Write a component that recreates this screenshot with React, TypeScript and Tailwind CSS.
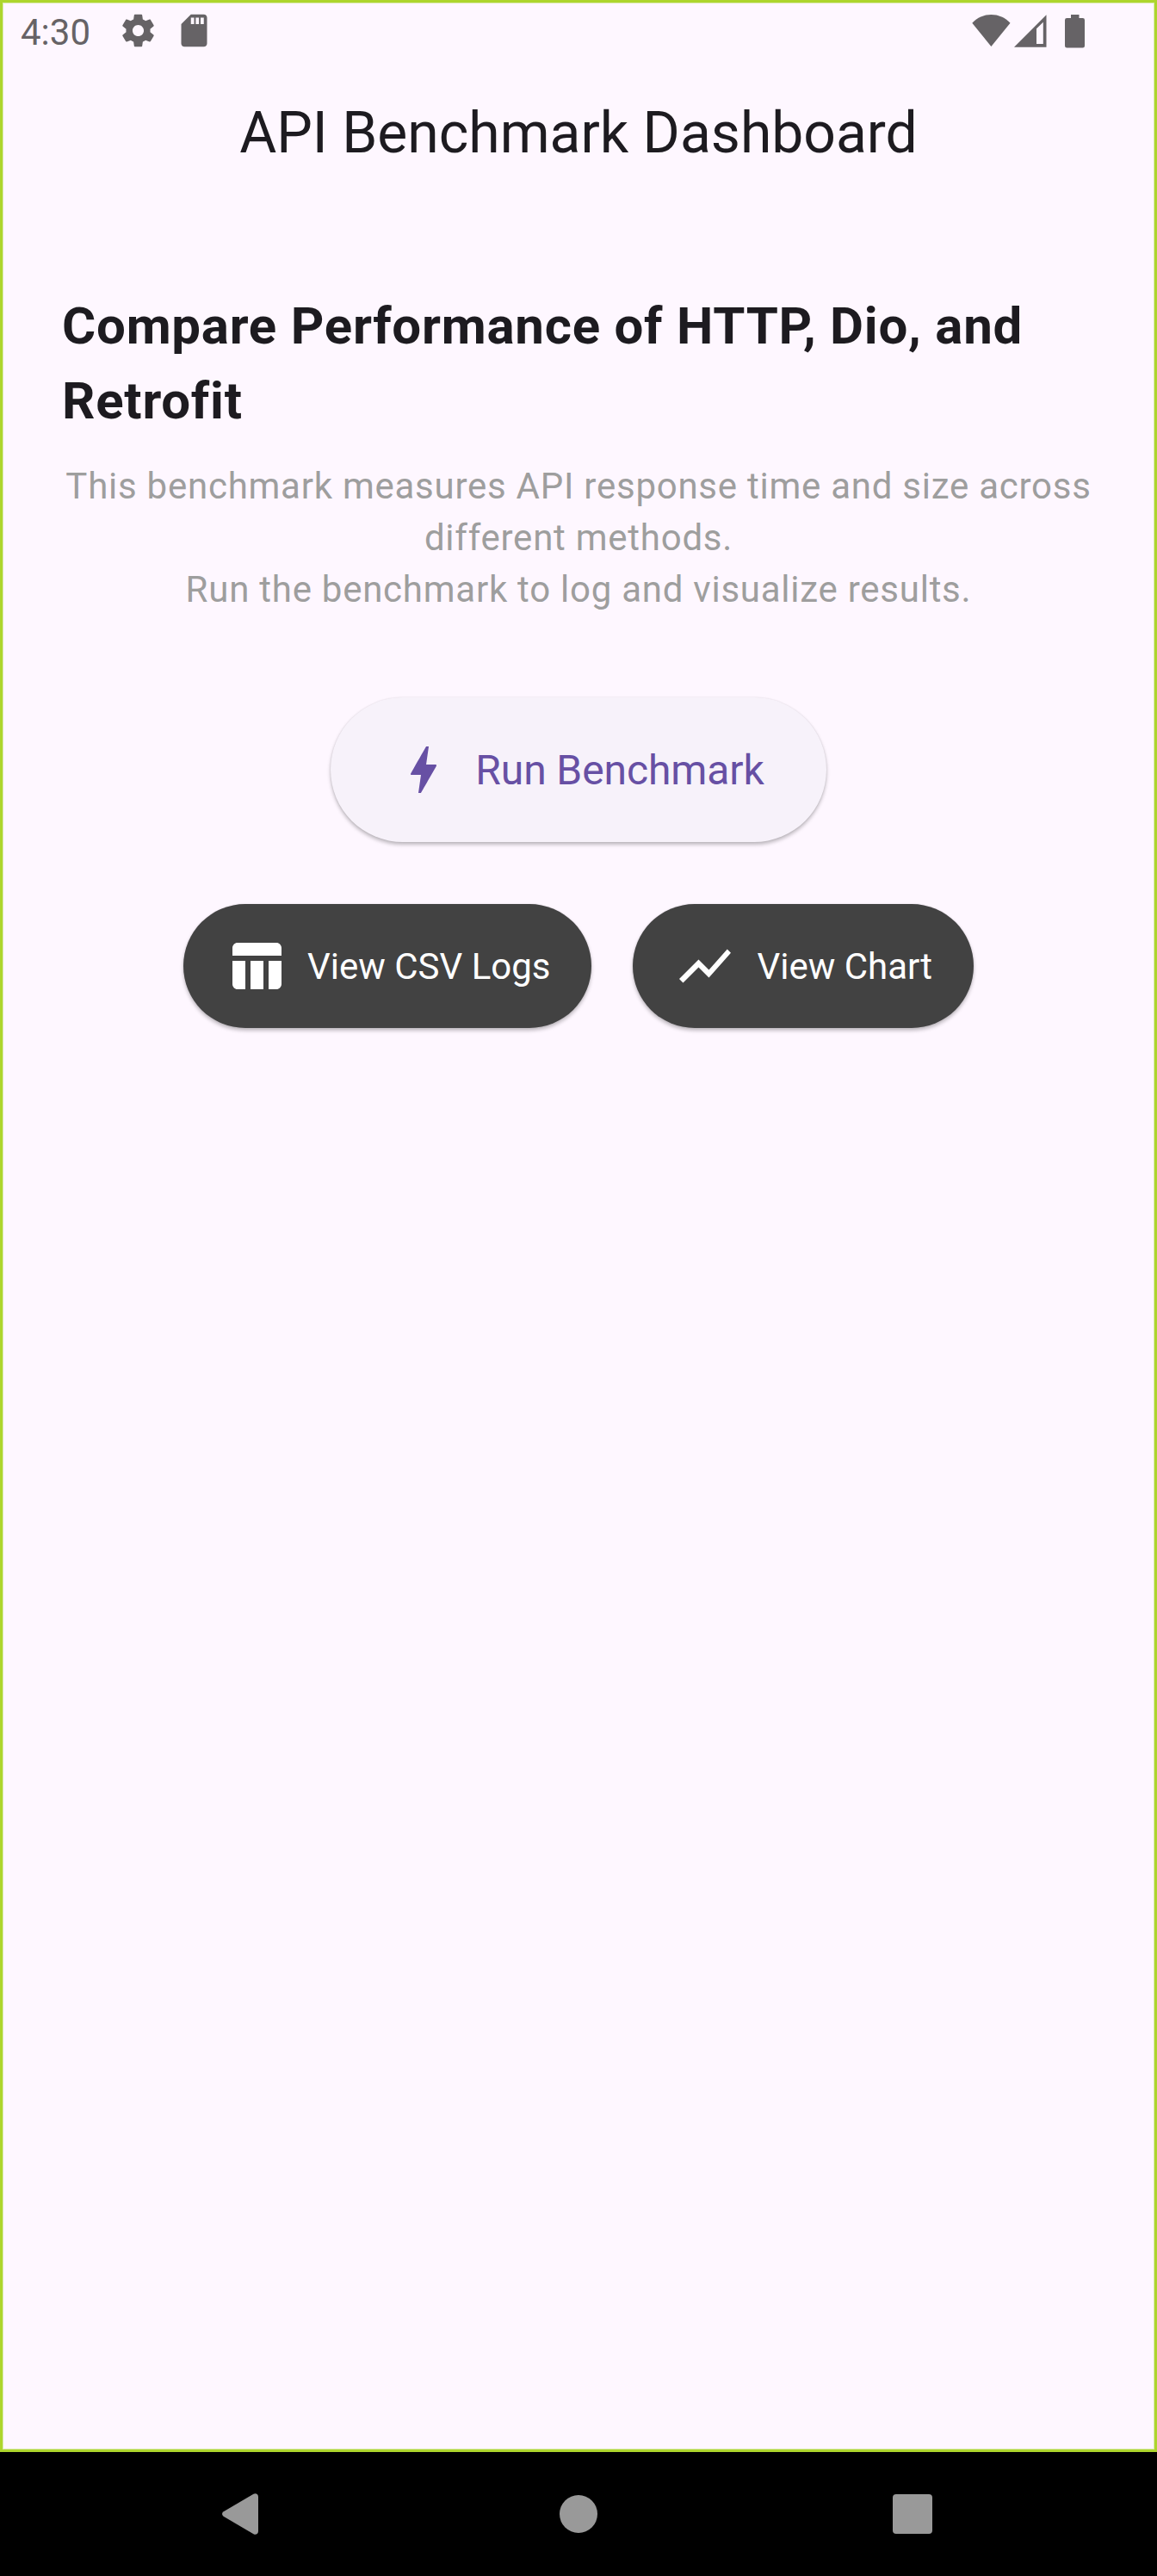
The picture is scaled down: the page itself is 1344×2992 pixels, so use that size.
import React from "react";

type IconProps = { className?: string };

const SettingsIcon = ({ className }: IconProps) => (
  <svg viewBox="0 0 24 24" fill="currentColor" className={className}>
    <path d="M19.43 12.98c.04-.32.07-.64.07-.98s-.03-.66-.07-.98l2.11-1.65c.19-.15.24-.42.12-.64l-2-3.46c-.12-.22-.39-.3-.61-.22l-2.49 1c-.52-.4-1.08-.73-1.69-.98l-.38-2.65C14.46 2.18 14.25 2 14 2h-4c-.25 0-.46.18-.49.42l-.38 2.65c-.61.25-1.17.59-1.69.98l-2.49-1c-.23-.09-.49 0-.61.22l-2 3.46c-.13.22-.07.49.12.64l2.11 1.65c-.04.32-.07.65-.07.98s.03.66.07.98l-2.11 1.65c-.19.15-.24.42-.12.64l2 3.46c.12.22.39.3.61.22l2.49-1c.52.4 1.08.73 1.69.98l.38 2.65c.03.24.24.42.49.42h4c.25 0 .46-.18.49-.42l.38-2.65c.61-.25 1.17-.59 1.69-.98l2.49 1c.23.09.49 0 .61-.22l2-3.46c.12-.22.07-.49-.12-.64l-2.11-1.65zM12 15.5c-1.93 0-3.5-1.57-3.5-3.5s1.57-3.5 3.5-3.5 3.5 1.57 3.5 3.5-1.57 3.5-3.5 3.5z" />
  </svg>
);

const SdCardIcon = ({ className }: IconProps) => (
  <svg viewBox="0 0 24 24" fill="currentColor" className={className}>
    <path d="M18 2h-8L4.02 8 4 20c0 1.1.9 2 2 2h12c1.1 0 2-.9 2-2V4c0-1.1-.9-2-2-2zm-6 6h-2V4h2v4zm3 0h-2V4h2v4zm3 0h-2V4h2v4z" />
  </svg>
);

const WifiIcon = ({ className }: IconProps) => (
  <svg viewBox="0 0 45 38" fill="currentColor" className={className}>
    <path d="M22.4 37L0.3 9.700C6.200 3.300 14 0 22.400 0S38.600 3.300 44.500 9.700Z" />
  </svg>
);

const SignalIcon = ({ className }: IconProps) => (
  <svg viewBox="0 0 38 38" fill="currentColor" fillRule="evenodd" className={className}>
    <path d="M0 37.700L37.500 0.200V37.700ZM26 16.300V34H33.800V8.700Z" />
  </svg>
);

const BatteryIcon = ({ className }: IconProps) => (
  <svg viewBox="0 0 23 39" fill="currentColor" className={className}>
    <path d="M7 0h9.500v4h4.200A2.300 2.300 0 0 1 23 6.300v30a2.300 2.300 0 0 1-2.300 2.300H2.300A2.300 2.300 0 0 1 0 36.300v-30A2.300 2.300 0 0 1 2.300 4H7z" />
  </svg>
);

const BoltIcon = ({ className }: IconProps) => (
  <svg viewBox="0 0 24 24" fill="currentColor" className={className}>
    <path d="M11 21h-1l1-7H7.5c-.88 0-.33-.75-.31-.78C8.480 10.940 10.420 7.540 13.010 3h1l-1 7h3.510c.4 0 .62.190.4.660C12.970 17.550 11 21 11 21z" />
  </svg>
);

const TableIcon = ({ className }: IconProps) => (
  <svg viewBox="0 0 24 24" fill="currentColor" className={className}>
    <path d="M10 10.02h5V21h-5zM17 21h3c1.1 0 2-.9 2-2v-9h-5v11zm3-18H5c-1.1 0-2 .9-2 2v3h19V5c0-1.1-.9-2-2-2zM3 19c0 1.1.9 2 2 2h3V10H3v9z" />
  </svg>
);

const ChartIcon = ({ className }: IconProps) => (
  <svg viewBox="0 0 24 24" fill="currentColor" className={className}>
    <path d="M3.5 18.49l6-6.01 4 4L22 6.92l-1.41-1.41-7.09 7.97-4-4L2 16.99z" />
  </svg>
);

function StatusBar() {
  return (
    <div className="flex h-[68px] items-start justify-between pt-[9px] pr-[80px] pl-[20px] text-[#666366]">
      <div className="flex items-start">
        <span className="w-[113.5px] text-[42px] leading-[49px]">4:30</span>
        <SettingsIcon className="size-[45px]" />
        <SdCardIcon className="ml-[20.5px] size-[45px]" />
      </div>
      <div className="flex items-start pt-[4px]">
        <WifiIcon className="h-[38px] w-[45px]" />
        <SignalIcon className="ml-[4px] h-[38px] w-[38px]" />
        <BatteryIcon className="ml-[21px] h-[39px] w-[23px]" />
      </div>
    </div>
  );
}

function DarkButton({ icon, label }: { icon: React.ReactNode; label: string }) {
  return (
    <button className="flex h-[144px] items-center gap-[24px] rounded-full bg-[#424242] px-[48px] text-[42px] leading-[60px] whitespace-nowrap text-white shadow-[0_3px_4px_rgba(0,0,0,0.25),0_0_2px_rgba(0,0,0,0.1)]">
      {icon}
      <span className="pt-[2px]">{label}</span>
    </button>
  );
}

function NavBar() {
  return (
    <nav className="flex h-[144px] items-center bg-black pl-[258px] text-[#999999]">
      <svg viewBox="0 0 42 48" fill="currentColor" className="h-[48px] w-[42px]">
        <path d="M1.600 21.300L36.500 0.700Q39 -0.600 41 1.200Q42 2.200 42 4V44Q42 45.800 41 46.800Q39 48.600 36.500 47.300L1.600 26.700Q-1.600 24 1.600 21.300Z" />
      </svg>
      <div className="ml-[350px] size-[44px] rounded-full bg-[#999999]" />
      <div className="ml-[343px] size-[46px] rounded-[4px] bg-[#999999]" />
    </nav>
  );
}

export default function App() {
  return (
    <div className="flex h-[2992px] w-[1344px] flex-col bg-black font-[Roboto,sans-serif]">
      <div className="flex h-[2848px] flex-col border-3 border-[#add52d] bg-[#fef7ff] p-px shadow-[inset_0_0_0_1px_#dbebb0]">
        <StatusBar />
        <header className="flex h-[166px] items-center justify-center">
          <h1 className="text-[66px] leading-[84px] text-[#1d1b20]">API Benchmark Dashboard</h1>
        </header>
        <main className="flex flex-col items-center px-[68px] pt-[97px]">
          <h2 className="w-full text-[60px] leading-[87px] font-bold tracking-[0.75px] text-[#1d1b20]">
            Compare Performance of HTTP, Dio, and
            <br />
            Retrofit
          </h2>
          <p className="mt-[26px] text-center text-[42px] leading-[60px] tracking-[0.75px] whitespace-nowrap text-[#9e9e9e]">
            This benchmark measures API response time and size across
            <br />
            different methods.
            <br />
            Run the benchmark to log and visualize results.
          </p>
          <button className="mt-[95px] flex h-[168px] items-center gap-[24px] rounded-full bg-[#f7f2fa] px-[72px] text-[48px] leading-[69px] tracking-[-0.1px] whitespace-nowrap text-[#6750a4] shadow-[0_3px_4px_rgba(0,0,0,0.25),0_0_2px_rgba(0,0,0,0.1)]">
            <BoltIcon className="size-[72px]" />
            <span>Run Benchmark</span>
          </button>
          <div className="mt-[72px] flex gap-[48px]">
            <DarkButton icon={<TableIcon className="size-[72px]" />} label="View CSV Logs" />
            <DarkButton icon={<ChartIcon className="size-[72px]" />} label="View Chart" />
          </div>
        </main>
      </div>
      <NavBar />
    </div>
  );
}
